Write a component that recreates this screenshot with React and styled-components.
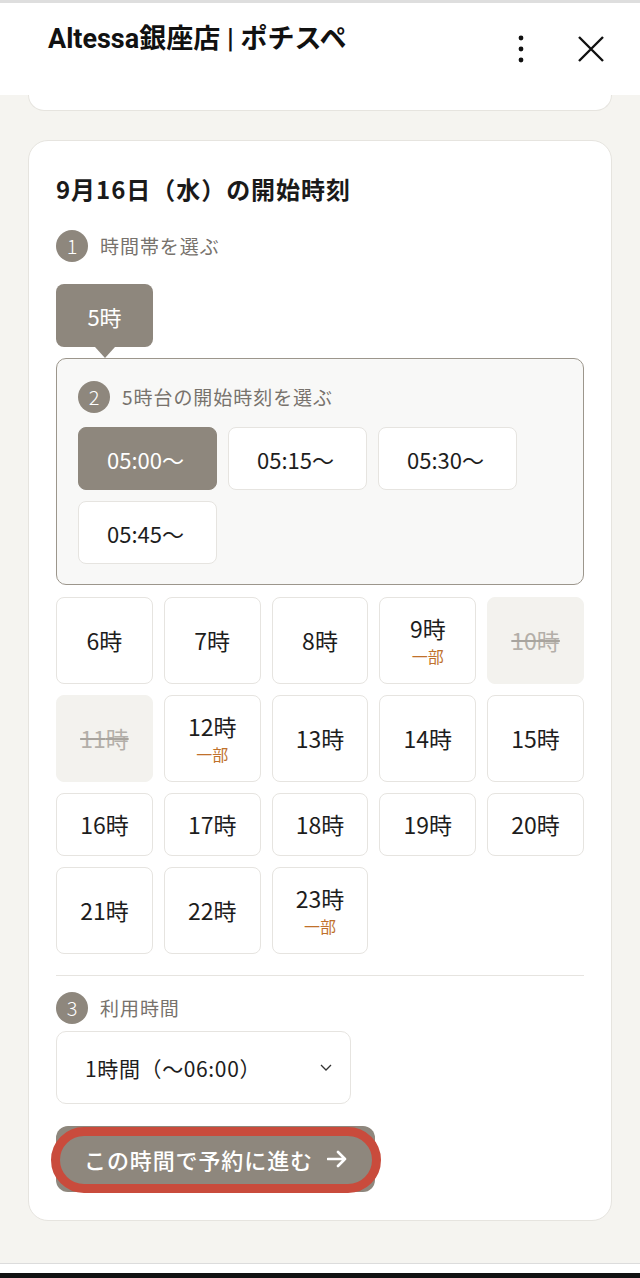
import React from "react";
import styled, { createGlobalStyle } from "styled-components";

const Global = createGlobalStyle`
  html, body { margin: 0; padding: 0; background: #ffffff; }
  body { font-family: "Noto Sans CJK JP", "Noto Sans", sans-serif; color: #222; }
  * { box-sizing: border-box; }
`;

const PRIMARY = "#8e877d";

const Page = styled.div`
  width: 640px;
  height: 1278px;
  display: flex;
  flex-direction: column;
  background: #f5f4f0;
  overflow: hidden;
`;

const TopStrip = styled.div`
  height: 3px;
  background: #dedede;
`;

const Header = styled.header`
  height: 92px;
  background: #fff;
  display: flex;
  align-items: center;
  justify-content: space-between;
  padding: 0 35px 0 48px;
`;

const Title = styled.h1`
  align-self: flex-start;
  margin: 18px 0 0;
  font-family: "Roboto", "Noto Sans CJK JP", sans-serif;
  font-weight: 700;
  font-size: 27px;
  line-height: 36px;
  color: #111;
`;

const Icons = styled.div`
  display: flex;
  align-items: center;
  gap: 51px;
`;

const Body = styled.main`
  flex: 1;
  display: flex;
  flex-direction: column;
  padding: 0 28px;
`;

const PrevCardStub = styled.div`
  height: 16px;
  background: #fff;
  border: 1px solid #e6e4df;
  border-top: none;
  border-radius: 0 0 20px 20px;
`;

const Card = styled.section`
  margin-top: 29px;
  background: #fff;
  border: 1px solid #e6e4df;
  border-radius: 20px;
  padding: 30px 27px 28px;
  display: flex;
  flex-direction: column;
`;

const CardTitle = styled.h2`
  margin: 0;
  font-size: 24px;
  line-height: 36px;
  font-weight: 700;
  letter-spacing: 0.04em;
  color: #1a1a1a;
`;

const StepRow = styled.div`
  display: flex;
  align-items: center;
  gap: 12px;
  margin-top: ${(p) => p.$mt || 0}px;
`;

const StepNum = styled.span`
  width: 32px;
  height: 32px;
  border-radius: 50%;
  background: ${PRIMARY};
  color: #fff;
  display: flex;
  align-items: center;
  justify-content: center;
  font-size: 20px;
  font-weight: 300;
  line-height: 1;
`;

const StepLabel = styled.span`
  font-size: 19px;
  letter-spacing: 0.05em;
  color: #77726c;
  line-height: 32px;
`;

const Tab = styled.div`
  position: relative;
  margin-top: 22px;
  width: 97px;
  height: 63px;
  border-radius: 8px;
  background: ${PRIMARY};
  color: #fff;
  font-size: 22px;
  display: flex;
  align-items: center;
  justify-content: center;
  &::after {
    content: "";
    position: absolute;
    left: 50%;
    bottom: -11px;
    transform: translateX(-50%);
    border-left: 10px solid transparent;
    border-right: 10px solid transparent;
    border-top: 11px solid ${PRIMARY};
  }
`;

const Panel = styled.div`
  margin-top: 11px;
  background: #f8f8f7;
  border: 1px solid #9c968c;
  border-radius: 10px;
  padding: 22px 21px 20px;
`;

const SlotWrap = styled.div`
  margin-top: 14px;
  display: flex;
  flex-wrap: wrap;
  gap: 11px;
`;

const Slot = styled.button`
  width: 139px;
  height: 63px;
  border-radius: 8px;
  border: 1px solid ${(p) => (p.$active ? PRIMARY : "#e6e4e0")};
  background: ${(p) => (p.$active ? PRIMARY : "#fff")};
  color: ${(p) => (p.$active ? "#fff" : "#1d1d1d")};
  font-family: "Noto Sans CJK JP", sans-serif;
  font-size: 22px;
  padding: 0 4px 0 0;
  display: flex;
  align-items: center;
  justify-content: center;
`;

const HourGrid = styled.div`
  margin-top: 12px;
  display: grid;
  grid-template-columns: repeat(5, 1fr);
  gap: 11px;
  align-items: stretch;
`;

const Hour = styled.div`
  min-height: 63px;
  border-radius: 8px;
  border: 1px solid ${(p) => (p.$disabled ? "#f3f2ee" : "#e6e4e0")};
  background: ${(p) => (p.$disabled ? "#f3f2ee" : "#fff")};
  display: flex;
  flex-direction: column;
  align-items: center;
  justify-content: center;
  padding: 16px 0;
`;

const HourText = styled.span`
  font-size: 23px;
  line-height: 29px;
  color: ${(p) => (p.$disabled ? "#b3afa9" : "#1d1d1d")};
  text-decoration: ${(p) => (p.$disabled ? "line-through" : "none")};
  text-decoration-color: #a8a49e;
  text-decoration-thickness: 2px;
`;

const Partial = styled.span`
  margin-top: 2px;
  font-size: 16px;
  line-height: 22px;
  color: #c0712b;
`;

const Divider = styled.hr`
  margin: 21px 0 0;
  border: none;
  border-top: 1px solid #e6e4e0;
`;

const SelectBox = styled.div`
  margin-top: 7px;
  width: 295px;
  height: 73px;
  border: 1px solid #e6e4e0;
  border-radius: 10px;
  display: flex;
  align-items: center;
  justify-content: space-between;
  padding: 0 18px 0 28px;
  font-size: 21px;
  letter-spacing: 0.03em;
  color: #1d1d1d;
`;

const PrimaryButton = styled.button`
  position: relative;
  margin-top: 22px;
  width: 319px;
  height: 66px;
  border: none;
  border-radius: 12px;
  background: ${PRIMARY};
  color: #fff;
  font-family: "Noto Sans CJK JP", sans-serif;
  font-size: 22px;
  font-weight: 500;
  letter-spacing: 0.04em;
  display: flex;
  align-items: center;
  justify-content: center;
  gap: 14px;
  padding: 0;
`;

const FocusRing = styled.span`
  position: absolute;
  left: -5px;
  right: -6px;
  top: 1px;
  bottom: -1px;
  border: 9px solid #c94b3c;
  border-radius: 999px;
  pointer-events: none;
`;

const BottomGap = styled.div`
  flex: 1;
`;

const BrowserBar = styled.div`
  height: 15px;
  border-top: 1px solid #dcdcdc;
  background: #fff;
  display: flex;
  flex-direction: column;
  justify-content: flex-end;
  &::after {
    content: "";
    height: 5px;
    background: #111;
  }
`;

const DotsIcon = () => (
  <svg width="10" height="30" viewBox="0 0 10 30">
    <circle cx="5" cy="4" r="2.4" fill="#111" />
    <circle cx="5" cy="15" r="2.4" fill="#111" />
    <circle cx="5" cy="26" r="2.4" fill="#111" />
  </svg>
);

const CloseIcon = () => (
  <svg width="28" height="28" viewBox="0 0 28 28">
    <path d="M2 2 L26 26 M26 2 L2 26" stroke="#111" strokeWidth="2.4" fill="none" />
  </svg>
);

const Chevron = () => (
  <svg width="12" height="7" viewBox="0 0 12 7">
    <path d="M1 1 L6 6 L11 1" stroke="#333" strokeWidth="1.3" fill="none" />
  </svg>
);

const Arrow = () => (
  <svg width="20" height="18" viewBox="0 0 20 18">
    <path d="M1 9 H18 M11 2 L18 9 L11 16" stroke="#fff" strokeWidth="2.6" fill="none" strokeLinecap="round" strokeLinejoin="round" />
  </svg>
);

const slots = ["05:00〜", "05:15〜", "05:30〜", "05:45〜"];

const hours = [
  { h: 6 }, { h: 7 }, { h: 8 }, { h: 9, partial: true }, { h: 10, disabled: true },
  { h: 11, disabled: true }, { h: 12, partial: true }, { h: 13 }, { h: 14 }, { h: 15 },
  { h: 16 }, { h: 17 }, { h: 18 }, { h: 19 }, { h: 20 },
  { h: 21 }, { h: 22 }, { h: 23, partial: true },
];

export default function App() {
  return (
    <>
      <Global />
      <Page>
        <TopStrip />
        <Header>
          <Title>Altessa銀座店 | ポチスペ</Title>
          <Icons>
            <DotsIcon />
            <CloseIcon />
          </Icons>
        </Header>
        <Body>
          <PrevCardStub />
          <Card>
            <CardTitle>9月16日（水）の開始時刻</CardTitle>
            <StepRow $mt={23}>
              <StepNum>1</StepNum>
              <StepLabel>時間帯を選ぶ</StepLabel>
            </StepRow>
            <Tab>5時</Tab>
            <Panel>
              <StepRow>
                <StepNum>2</StepNum>
                <StepLabel>5時台の開始時刻を選ぶ</StepLabel>
              </StepRow>
              <SlotWrap>
                {slots.map((s, i) => (
                  <Slot key={s} $active={i === 0}>{s}</Slot>
                ))}
              </SlotWrap>
            </Panel>
            <HourGrid>
              {hours.map((x) => (
                <Hour key={x.h} $disabled={x.disabled}>
                  <HourText $disabled={x.disabled}>{x.h}時</HourText>
                  {x.partial && <Partial>一部</Partial>}
                </Hour>
              ))}
            </HourGrid>
            <Divider />
            <StepRow $mt={16}>
              <StepNum>3</StepNum>
              <StepLabel>利用時間</StepLabel>
            </StepRow>
            <SelectBox>
              <span>1時間（〜06:00）</span>
              <Chevron />
            </SelectBox>
            <PrimaryButton>
              <FocusRing />
              <span>この時間で予約に進む</span>
              <Arrow />
            </PrimaryButton>
          </Card>
          <BottomGap />
        </Body>
        <BrowserBar />
      </Page>
    </>
  );
}
